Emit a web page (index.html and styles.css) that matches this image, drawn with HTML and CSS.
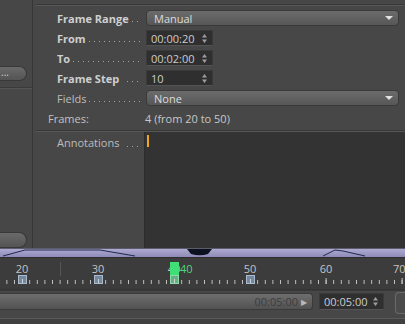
FILE: index.html
```html
<!doctype html>
<html>
<head>
<meta charset="utf-8">
<title>Render Settings</title>
<link rel="stylesheet" href="styles.css">
</head>
<body>
<div class="app">
	<div class="main">
		<div class="side">
			<div class="side-btn">...</div>
			<div class="side-sep"></div>
			<div class="side-fill"></div>
			<div class="side-btn side-btn-low"></div>
		</div>
		<div class="panel">
			<div class="panel-line"></div>
			<div class="form">
				<div class="row">
					<div class="label bold"><span>Frame Range</span><span class="lead"></span></div>
					<div class="select"><span>Manual</span><i class="caret"></i></div>
				</div>
				<div class="row">
					<div class="label bold"><span>From</span><span class="lead"></span></div>
					<div class="spin"><span>00:00:20</span><svg class="arrows" width="5" height="9" viewBox="0 0 5 9"><path d="M2.5 0 L5 3.5 L0 3.5 Z M0 5.5 L5 5.5 L2.5 9 Z"/></svg></div>
				</div>
				<div class="row">
					<div class="label bold"><span>To</span><span class="lead"></span></div>
					<div class="spin"><span>00:02:00</span><svg class="arrows" width="5" height="9" viewBox="0 0 5 9"><path d="M2.5 0 L5 3.5 L0 3.5 Z M0 5.5 L5 5.5 L2.5 9 Z"/></svg></div>
				</div>
				<div class="row">
					<div class="label bold"><span>Frame Step</span><span class="lead gap"></span></div>
					<div class="spin"><span>10</span><svg class="arrows" width="5" height="9" viewBox="0 0 5 9"><path d="M2.5 0 L5 3.5 L0 3.5 Z M0 5.5 L5 5.5 L2.5 9 Z"/></svg></div>
				</div>
				<div class="row">
					<div class="label"><span>Fields</span><span class="lead"></span></div>
					<div class="select"><span>None</span><i class="caret"></i></div>
				</div>
				<div class="row info">
					<div class="info-label">Frames:</div>
					<div class="info-value">4 (from 20 to 50)</div>
				</div>
			</div>
			<div class="sep"></div>
			<div class="notes">
				<div class="notes-label"><span>Annotations</span><span class="lead gap"></span></div>
				<div class="notes-area"><span class="cursor"></span></div>
			</div>
		</div>
	</div>

	<div class="range">
		<svg class="range-svg" width="405" height="9" viewBox="0 0 405 9">
			<polyline points="3,8 25,2 100,2 135,8" fill="none" stroke="#1e2a4c" stroke-width="1"/>
			<polyline points="323,8 335,2 343,3 365,8" fill="none" stroke="#1e2a4c" stroke-width="1"/>
			<path d="M187 1 L212 1 L208 6 Q200 8.5 191 6 Z" fill="#0c1220"/>
		</svg>
	</div>

	<div class="ruler">
		<div class="grid-line" style="left:60px"></div>
		<span class="num" style="left:22px">20</span>
		<span class="num" style="left:98px">30</span>
		<span class="num" style="left:174px">40</span>
		<span class="num" style="left:250px">50</span>
		<span class="num" style="left:326px">60</span>
		<span class="num num-edge" style="left:393px">70</span>
		<svg class="ticks" width="405" height="6" viewBox="0 0 405 6" shape-rendering="crispEdges">
			<defs>
				<pattern id="tk" patternUnits="userSpaceOnUse" x="21.6" y="0" width="7.6" height="6">
					<rect x="0" y="2" width="1" height="4" fill="#c4c4c4"/>
				</pattern>
				<pattern id="tk10" patternUnits="userSpaceOnUse" x="21.6" y="0" width="76" height="6">
					<rect x="0" y="0" width="1" height="6" fill="#c4c4c4"/>
				</pattern>
			</defs>
			<rect width="405" height="6" fill="url(#tk)"/>
			<rect width="405" height="6" fill="url(#tk10)"/>
		</svg>
		<span class="key" style="left:22px"></span>
		<span class="key" style="left:98px"></span>
		<span class="key" style="left:250px"></span>
		<div class="playhead" style="left:174px"></div>
		<span class="key key-cur" style="left:174px"></span>
		<span class="cur-num" style="left:180px">40</span>
	</div>

	<div class="footer">
		<div class="slider"><span class="slider-time">00:05:00</span><span class="play">&#9654;</span></div>
		<div class="spin spin-foot"><span>00:05:00</span><svg class="arrows" width="5" height="9" viewBox="0 0 5 9"><path d="M2.5 0 L5 3.5 L0 3.5 Z M0 5.5 L5 5.5 L2.5 9 Z"/></svg></div>
		<div class="foot-btn"></div>
	</div>
	<div class="bottom"></div>
</div>
</body>
</html>
```

FILE: styles.css
```css
* {margin:0; padding:0; box-sizing:border-box;}

body {width:405px; height:324px; overflow:hidden; background:#474747; font-family:"Open Sans", "Noto Sans", sans-serif; font-size:11px; color:#c8c8c8;}

.app {display:flex; flex-direction:column; height:324px;}

/* top area */
.main {display:flex; height:248px;}

.side {width:33px; display:flex; flex-direction:column; padding-top:66px; border-right:1px solid #363636;}
.side-btn {width:27px; height:15px; border:1px solid #383838; border-left:0; border-radius:0 8px 8px 0; background:linear-gradient(#6a6a6a, #545454); color:#cfcfcf; font-size:10px; line-height:11px; padding-left:1px;}
.side-sep {margin-top:6px; height:2px; border-top:1px solid #3a3a3a; border-bottom:1px solid #555;}
.side-fill {flex:1;}
.side-btn-low {height:16px; margin-bottom:0;}

.panel {flex:1; display:flex; flex-direction:column; padding-top:4px;}
.panel-line {height:2px; margin-left:2px; border-top:1px solid #383838; border-bottom:1px solid #585858;}

.form {padding:2px 6px 0 15px;}
.row {display:flex; align-items:center; height:20px;}
.label {width:98px; padding-left:9px; display:flex; align-items:center; white-space:nowrap; color:#bdbdbd;}
.label.bold {font-weight:bold; color:#cfcfcf;}
/* dot leaders */
.lead {flex:1; height:1px; margin:7px 4px 0 3px; background:linear-gradient(to right, #a4a4a4 1px, transparent 1px) 0 0 / 5px 1px repeat-x;}
.lead.gap {margin-left:8px;}

.select {flex:1; height:16px; display:flex; align-items:center; justify-content:space-between; padding:0 5px 0 7px; border:1px solid #3a3a3a; border-radius:4px; background:linear-gradient(#6c6c6c, #575757); color:#dcdcdc;}
.caret {width:0; height:0; border-left:4px solid transparent; border-right:4px solid transparent; border-top:4px solid #e2e2e2;}

.spin {width:67px; height:16px; display:flex; align-items:center; justify-content:space-between; padding:0 5px 0 4px; background:#2f2f2f; border:1px solid #3a3a3a; border-bottom-color:#545454; color:#cdcdcd;}
.arrows {fill:#9c9c9c; display:block;}

.info {height:18px; margin-top:1px;}
.info-label {width:97px; color:#c2c2c2;}
.info-value {color:#c8c8c8;}

.sep {margin-top:3px; height:2px; margin-left:2px; border-top:1px solid #383838; border-bottom:1px solid #575757;}

.notes {flex:1; display:flex;}
.notes-label {width:111px; height:21px; padding:0 0 0 24px; display:flex; align-items:center; white-space:nowrap; color:#bdbdbd;}
.notes-area {flex:1; background:#333; border-left:1px solid #2c2c2c; padding:3px 0 0 2px;}
.cursor {display:block; width:2px; height:12px; background:#f2a51e;}

/* timeline */
.range {height:9px; background:linear-gradient(#aeaad2, #8f8bb8); border-top:1px solid #5c5c6a;}
.range-svg {display:block; margin-top:-1px;}

.ruler {position:relative; height:33px; background:#3c3c3c; border-top:1px solid #2e2e2e; border-bottom:1px solid #333; overflow:hidden;}
.grid-line {position:absolute; top:4px; width:1px; height:14px; background:#565656;}
.num {position:absolute; top:3px; transform:translateX(-50%); color:#c4c4c4; font-size:11px; line-height:15px;}
.num-edge {transform:none;}
.ticks {position:absolute; left:0; top:20px; display:block;}
.key {position:absolute; top:17px; width:9px; height:9px; margin-left:-4px; background:#75879c; border:1px solid #a9bccf;}
.key::after {content:""; position:absolute; left:3px; top:3px; width:1px; height:4px; background:#d0d0d0;}
.playhead {position:absolute; top:4px; width:9px; height:15px; margin-left:-4px; background:#3fde76;}
.key-cur {background:#66b088; border-color:#8fd8a8;}
.cur-num {position:absolute; top:3px; color:#4fd67b; line-height:15px;}

.footer {display:flex; align-items:flex-start; height:28px; padding-top:2px; border-top:1px solid #3a3a3a;}
.slider {width:318px; height:17px; display:flex; align-items:center; justify-content:flex-end; padding-right:5px; border:1px solid #3a3a3a; border-left:0; border-radius:0 4px 4px 0; background:linear-gradient(#6e6e6e, #525252);}
.slider-time {color:#3d3d3d; margin-right:3px;}
.play {color:#b8b8b8; font-size:8px;}
.spin-foot {margin-left:6px; width:66px; height:17px;}
.foot-btn {margin-left:11px; width:10px; height:22px; margin-top:-1px; border:1px solid #6a6a6a; border-right:0; border-radius:4px 0 0 4px; background:#4b4b4b;}

.bottom {flex:1; border-top:1px solid #5a5a5a; background:#404040;}
```
